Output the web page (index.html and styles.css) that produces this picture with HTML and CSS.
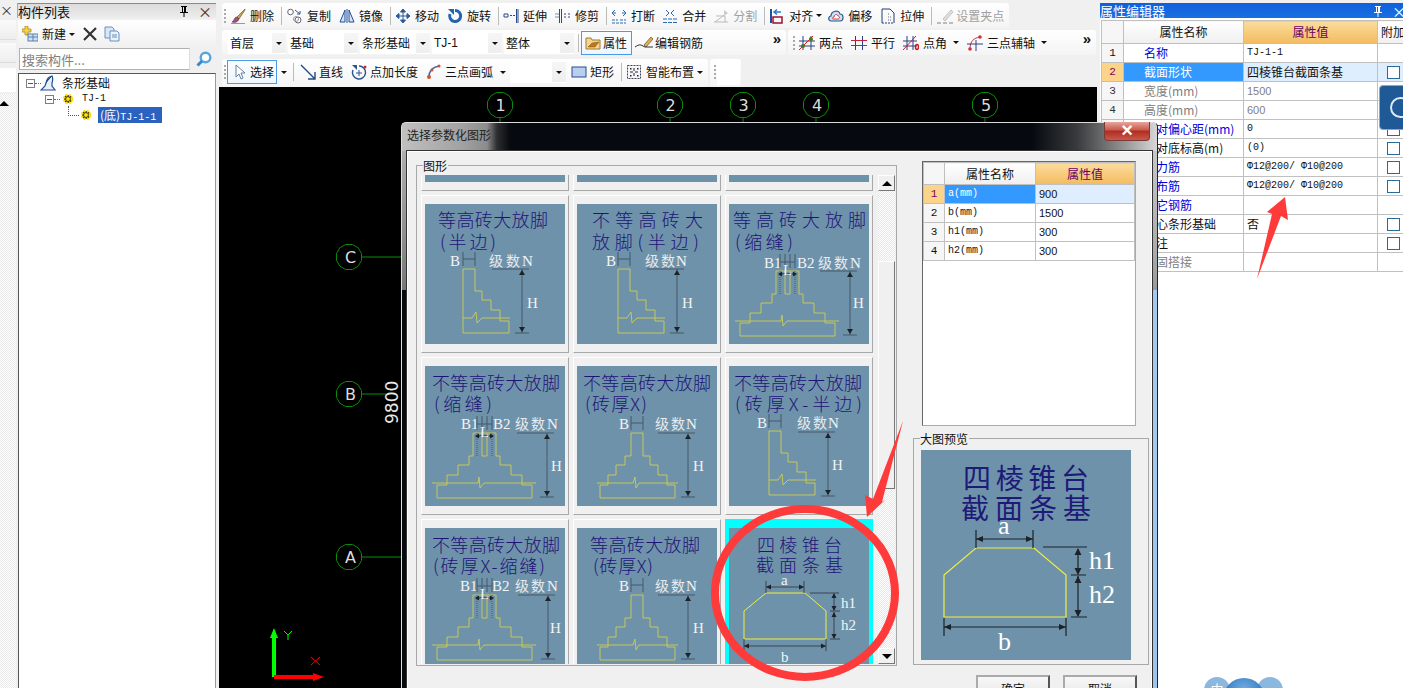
FILE: index.html
```html
<!DOCTYPE html>
<html lang="zh-CN">
<head>
<meta charset="utf-8">
<title>选择参数化图形</title>
<link rel="stylesheet" href="styles.css">
</head>
<body>
<svg class="defs" aria-hidden="true">
  <defs>
    <symbol id="i-pin" viewBox="0 0 12 12"><path d="M3 1h6v1H8v5h2v1H2V7h2V2H3zM5 2v5h1V2zM5.500 8h1v4h-1z"/></symbol>
    <symbol id="i-del" viewBox="0 0 16 16"><path d="M15 1 7 9l2 2 6-9z" fill="#c9a24a" stroke="#5a4a20" stroke-width=".6"/><path d="M7 9c-3 0-2 3-5 5 3 1 6 0 7-3z" fill="#a2507a" stroke="#5a2a4a" stroke-width=".6"/><path d="M1 15.500h14" stroke="#999"/></symbol>
    <symbol id="i-copy" viewBox="0 0 16 16"><circle cx="3.500" cy="4" r="2.800" fill="#fff" stroke="#667"/><circle cx="11" cy="12" r="3" fill="#fff" stroke="#667"/><circle cx="9" cy="11" r="2.500" fill="none" stroke="#99a"/><path d="M8 2l5 4M13 3v3h-3" fill="none" stroke="#2a5a9a"/></symbol>
    <symbol id="i-mirror" viewBox="0 0 16 16"><path d="M6 2 1 14h5zM10 2l5 12h-5z" fill="#d5e4f5" stroke="#1f4f9a"/><path d="M8 1v14" stroke="#1f4f9a"/></symbol>
    <symbol id="i-move" viewBox="0 0 16 16"><path d="M8 1v14M1 8h14M8 1 5.500 4h5zM8 15l-2.500-3h5zM1 8l3-2.500v5zM15 8l-3-2.500v5z" fill="#2a5a9a" stroke="#2a5a9a"/></symbol>
    <symbol id="i-rot" viewBox="0 0 16 16"><path d="M8 2.500a5.500 5.500 0 1 1-5 3.500" fill="none" stroke="#2563b0" stroke-width="3"/><path d="M1 1h6v6z" fill="#2563b0"/></symbol>
    <symbol id="i-ext" viewBox="0 0 16 16"><path d="M1 6h4v3H1z" fill="none" stroke="#2a4a8a"/><path d="M7 7.500h5" stroke="#2a4a8a" stroke-dasharray="2 1"/><path d="M13.500 1v14M15 1v14" stroke="#2a4a8a"/></symbol>
    <symbol id="i-trim" viewBox="0 0 16 16"><path d="M4.500 1v14M6.500 1v14" stroke="#2a4a8a"/><path d="M0 6h4M0 9h4" stroke="#7a90b0"/><path d="M9 6h2M9 9h2M13 6h2M13 9h2" stroke="#2a4a8a"/></symbol>
    <symbol id="i-brk" viewBox="0 0 16 16"><path d="M1 12h6M9 12h6M1 15h14" stroke="#2a6ab0" stroke-dasharray="3 1"/><path d="M4 2 1 5l3 3M12 2l3 3-3 3" fill="none" stroke="#2a6ab0"/><path d="M1 5h4M11 5h4" stroke="#2a6ab0"/></symbol>
    <symbol id="i-mrg" viewBox="0 0 16 16"><path d="M1 11h14M1 14.500h14" stroke="#2a6ab0" stroke-dasharray="4 1"/><path d="M4 2 7 5 4 8M12 2 9 5l3 3" fill="none" stroke="#2a6ab0"/></symbol>
    <symbol id="i-split" viewBox="0 0 16 16"><path d="M1 14h14M2 14 14 5M3 8h9v6" fill="none" stroke="#bbb"/><path d="M11 2l4 3-4 3" fill="#ccc"/></symbol>
    <symbol id="i-align" viewBox="0 0 16 16"><path d="M2 1v14" stroke="#1f4f9a" stroke-width="2"/><path d="M4 9h9v6H4z" fill="none" stroke="#a01030" stroke-width="1.500"/><path d="M12 4H5M8 1.500 5 4l3 2.500" fill="none" stroke="#2a7ad0" stroke-width="1.500"/></symbol>
    <symbol id="i-offs" viewBox="0 0 16 16"><path d="M3 13C0 13 0 8 3 8c0-5 8-7 9-2 4 0 4 7 0 7z" fill="#cfe0f0" stroke="#235a90" stroke-width="1.200"/><path d="M5 11c-1 0-1-2 1-2 0-3 4-3 4-1 2 0 2 3 0 3z" fill="#fff" stroke="#d04040"/></symbol>
    <symbol id="i-strch" viewBox="0 0 16 16"><path d="M2 15V1h8l4 4v10" fill="none" stroke="#1f3f80"/><path d="M2 15h12" stroke="#1f3f80" stroke-dasharray="2 1"/><path d="M8 6h2M8 9h3M8 12h3" stroke="#667" stroke-dasharray="1 1"/></symbol>
    <symbol id="i-grip" viewBox="0 0 18 16"><path d="M7 11 15 2l2 2-8 9z" fill="#ddd" stroke="#c4c4c4"/><path d="M1 15h4M7 15h4M13 15h4" stroke="#bbb" stroke-width="2"/></symbol>
    <symbol id="i-attr" viewBox="0 0 16 16"><path d="M1 3h5l1 2h8v9H1z" fill="#f4d78a" stroke="#a07830"/><path d="M3 12l4-4 7-1-4 5z" fill="#c07820" stroke="#805010" stroke-width=".5"/></symbol>
    <symbol id="i-rebar" viewBox="0 0 18 16"><path d="M9 10 16 2l2 2-7 8z" fill="#e8b050" stroke="#5a4a20" stroke-width=".7"/><path d="M0 12c3-2 5-3 8-1l2 1h8" fill="none" stroke="#333"/></symbol>
    <symbol id="i-two" viewBox="0 0 16 16"><path d="M4 1v14M12 1v14M0 6h16M0 11h16" stroke="#2a3f8a"/><path d="M0 15 14 1" stroke="#d01a1a"/><circle cx="4" cy="11" r="2" fill="#4a7a20"/><circle cx="12" cy="4" r="2" fill="#4a7a20"/></symbol>
    <symbol id="i-par" viewBox="0 0 16 16"><path d="M4.500 1v14M11.500 1v14" stroke="#2a3f8a"/><path d="M0 5.500h16M0 10.500h16" stroke="#c8203a"/></symbol>
    <symbol id="i-ang" viewBox="0 0 16 16"><path d="M4 1v14M10 1v14M0 6h14M0 11h14" stroke="#2a3f8a"/><path d="M0 15 13 1" stroke="#d01a1a"/><ellipse cx="14" cy="12" rx="1.500" ry="2.500" fill="none" stroke="#d01a1a" stroke-width="1.500"/></symbol>
    <symbol id="i-aux" viewBox="0 0 16 16"><path d="M3 14C3 6 7 3 13 2" fill="none" stroke="#d0303a"/><circle cx="3" cy="14" r="1.800" fill="#d0303a"/><circle cx="13" cy="2" r="1.800" fill="#d0303a"/><path d="M9 5v11M0 9h16" stroke="#2a3f8a"/></symbol>
    <symbol id="i-sel" viewBox="0 0 16 16"><path d="M4 1v12l3-3 2 5 2-1-2-5h4z" fill="#fff" stroke="#6a7fa0"/></symbol>
    <symbol id="i-line" viewBox="0 0 16 16"><path d="M1 1 15 15M15 8v7H8" fill="none" stroke="#224a80" stroke-width="1.400"/></symbol>
    <symbol id="i-len" viewBox="0 0 16 16"><path d="M8 2a6.500 6.500 0 1 1-6 4" fill="none" stroke="#2a5590" stroke-width="1.400"/><path d="M1 1h5v5z" fill="#2a5590"/><path d="M8 6v6M5 9h6" stroke="#2a5590"/><circle cx="14" cy="3" r="1.500" fill="#c03030"/></symbol>
    <symbol id="i-arc" viewBox="0 0 16 16"><path d="M3 13C3 7 7 3 13 2" fill="none" stroke="#3a6ab0" stroke-width="1.500"/><circle cx="3" cy="13" r="2" fill="#d8502a"/><circle cx="6" cy="6" r="1.500" fill="#d8502a"/><circle cx="13" cy="2" r="1.500" fill="#d8502a"/></symbol>
    <symbol id="i-rect" viewBox="0 0 16 16"><rect x="1" y="3" width="14" height="10" fill="#b8d0f0" stroke="#2a4a90"/></symbol>
    <symbol id="i-smart" viewBox="0 0 16 16"><rect x="1.500" y="1.500" width="13" height="13" fill="#f6f6f6" stroke="#445" stroke-dasharray="2 1"/><path d="M8 4v3M8 9v3M4 8h3M9 8h3" stroke="#223"/><path d="M4 4h1.500v1.500H4zM11 4h1.500v1.500H11zM4 11h1.500v1.500H4zM11 11h1.500v1.500H11z" fill="#223"/></symbol>
    <symbol id="i-new" viewBox="0 0 16 16"><path d="M3 0h3v3h3v3H6v3H3V6H0V3h3z" fill="#f4d23c" stroke="#a08020" stroke-width=".7"/><rect x="6" y="8" width="10" height="7" fill="#cfe0f2" stroke="#5a80b0"/><path d="M6 11h10M11 8v7" stroke="#5a80b0"/></symbol>
    <symbol id="i-x" viewBox="0 0 16 16"><path d="M2 2l12 12M14 2 2 14" stroke="#333" stroke-width="2.200"/></symbol>
    <symbol id="i-dup" viewBox="0 0 16 16"><path d="M1 1h7l2 2v9H1z" fill="#d8e6f6" stroke="#6a90c0"/><path d="M6 5h7l2 2v8H6z" fill="#eaf2fb" stroke="#6a90c0"/><path d="M8 9h5M8 11h5" stroke="#6a90c0"/></symbol>
    <symbol id="i-find" viewBox="0 0 16 16"><circle cx="9.500" cy="6.500" r="4.800" fill="#fff" stroke="#58a6e0" stroke-width="2.400"/><path d="M6 10 1.500 14.500" stroke="#3a86c8" stroke-width="3"/></symbol>
    <symbol id="i-root" viewBox="0 0 16 16"><path d="M1 15h14l-3-4V8c1-3 1-5 0-7-4 1-5 3-6 7l-1 3z" fill="#e8f0fa" stroke="#1f4f90" stroke-width="1.200"/><path d="M6 8c1-3 3-5 6-7" stroke="#1f4f90"/></symbol>
    <symbol id="i-gear" viewBox="0 0 12 12"><circle cx="6" cy="6" r="4" fill="#222" stroke="#ffe000" stroke-width="2.600" stroke-dasharray="2 1.200"/><circle cx="6" cy="6" r="2" fill="#ffe000"/></symbol>
    <symbol id="bubble" viewBox="-14 -14 28 28"><polygon points="12.500,3.400 9.200,9.200 3.400,12.500 -3.400,12.500 -9.200,9.200 -12.500,3.400 -12.500,-3.400 -9.200,-9.200 -3.400,-12.500 3.400,-12.500 9.200,-9.200 12.500,-3.400" fill="none" stroke="#0a8a0a"/></symbol>
    <g id="s-half"><path class="yl" d="M38 65h12v22h7v9h9v10h9v11h9v12H38z"/><path class="yl" d="M38 114h9l4-6 1 11 5-5h28"/><path class="dk" d="M38 48v14M50 48v14M38 55h12"/></g>
    <g id="s-slot"><path class="yl" d="M48 67v23h-4v9H33v10H22v10H12v13h95v-13H97v-10H86V99H75v-9h-4V67zM57 67v23h5V67"/><path class="yl" d="M7 117h46l1-6 1 11 4-5h52"/><path class="dk" d="M52 50v14M57 50v14M62 50v14M67 50v14M52 58h15"/><path class="dot" d="M52 67v23M67 67v23"/><path class="ar" d="M52 70h15"/><path class="hd" d="M50 70l4-2.500v5zM69 70l-4-2.500v5z"/></g>
    <g id="s-full"><path class="yl" d="M54 67h12v23h7v9h8v10h9v10h8v13H23v-13h8v-10h8V99h9v-9h6z"/><path class="yl" d="M20 117h36l2-6 1 11 3-5h39"/><path class="dk" d="M54 50v14M66 50v14M54 57h12"/></g>
    <g id="s-hdim"><path class="dk" d="M0 0h37M30 0v64M23 64h14"/><path class="hd" d="M30 1l-3 5h6zM30 63l-3-5h6z"/></g>
  </defs>
</svg>

<div class="app">
  <aside class="strip">
    <div class="strip-x">×</div>
    <div class="strip-tab"></div>
    <div class="strip-tab"></div>
    <div class="strip-white"></div>
    <div class="strip-scroll"><span class="up-arrow"></span></div>
  </aside>

  <section class="list-panel">
    <header class="panel-head"><span>构件列表</span><svg class="pin"><use href="#i-pin"/></svg><span class="close">×</span></header>
    <div class="list-tools">
      <svg class="ic"><use href="#i-new"/></svg><span>新建</span><i class="caret"></i>
      <svg class="ic ic-x"><use href="#i-x"/></svg>
      <svg class="ic ic-dup"><use href="#i-dup"/></svg>
    </div>
    <div class="search-row">
      <div class="search-box">搜索构件...</div>
      <svg class="ic"><use href="#i-find"/></svg>
    </div>
    <div class="tree">
      <div class="node n1"><i class="exp"></i><i class="dots"></i><svg class="ic"><use href="#i-root"/></svg><span>条形基础</span></div>
      <div class="node n2"><i class="exp"></i><i class="dots"></i><svg class="gear"><use href="#i-gear"/></svg><span class="mono">TJ-1</span></div>
      <div class="node n3"><i class="elbow"></i><svg class="gear"><use href="#i-gear"/></svg><span class="sel-node">(底)<span class="mono">TJ-1-1</span></span></div>
    </div>
  </section>

  <main class="center">
    <div class="tb-row r1">
      <div class="tb">
        <i class="grip"></i>
        <div class="it"><svg class="ic"><use href="#i-del"/></svg>删除</div><i class="sep first"></i>
        <div class="it"><svg class="ic"><use href="#i-copy"/></svg>复制</div>
        <div class="it"><svg class="ic"><use href="#i-mirror"/></svg>镜像</div><i class="sep"></i>
        <div class="it"><svg class="ic"><use href="#i-move"/></svg>移动</div>
        <div class="it"><svg class="ic"><use href="#i-rot"/></svg>旋转</div><i class="sep"></i>
        <div class="it"><svg class="ic"><use href="#i-ext"/></svg>延伸</div>
        <div class="it"><svg class="ic"><use href="#i-trim"/></svg>修剪</div><i class="sep"></i>
        <div class="it tight"><svg class="ic"><use href="#i-brk"/></svg>打断</div>
        <div class="it tight"><svg class="ic"><use href="#i-mrg"/></svg>合并</div>
        <div class="it off"><svg class="ic"><use href="#i-split"/></svg>分割</div><i class="sep"></i>
        <div class="it tighter"><svg class="ic"><use href="#i-align"/></svg>对齐<i class="caret"></i></div>
        <div class="it"><svg class="ic"><use href="#i-offs"/></svg>偏移</div>
        <div class="it"><svg class="ic"><use href="#i-strch"/></svg>拉伸</div><i class="sep"></i>
        <div class="it off last"><svg class="ic ic18"><use href="#i-grip"/></svg>设置夹点</div>
      </div>
    </div>
    <div class="tb-row r2">
      <div class="tb tb-combos">
        <div class="combo c1">首层<i class="drop"></i></div>
        <div class="combo">基础<i class="drop"></i></div>
        <div class="combo">条形基础<i class="drop"></i></div>
        <div class="combo"><span class="sans">TJ-1</span><i class="drop"></i></div>
        <div class="combo">整体<i class="drop"></i></div>
        <i class="sep sep-a"></i>
        <div class="btn-on attr"><svg class="ic"><use href="#i-attr"/></svg>属性</div>
        <div class="it rebar"><svg class="ic ic18"><use href="#i-rebar"/></svg>编辑钢筋</div>
        <span class="more">»</span>
      </div>
      <div class="tb tb-axis">
        <i class="grip"></i>
        <div class="it"><svg class="ic"><use href="#i-two"/></svg>两点</div>
        <div class="it"><svg class="ic"><use href="#i-par"/></svg>平行</div>
        <div class="it"><svg class="ic"><use href="#i-ang"/></svg>点角<i class="caret c-wide"></i></div>
        <div class="it"><svg class="ic"><use href="#i-aux"/></svg>三点辅轴<i class="caret c-wide"></i></div>
        <span class="more">»</span>
      </div>
    </div>
    <div class="tb-row r3">
      <div class="tb tb-draw">
        <i class="grip"></i>
        <div class="btn-on pick"><svg class="ic"><use href="#i-sel"/></svg>选择</div><i class="caret c-pick"></i>
        <i class="sep sep-b"></i>
        <div class="it"><svg class="ic"><use href="#i-line"/></svg>直线</div>
        <div class="it"><svg class="ic"><use href="#i-len"/></svg>点加长度</div>
        <div class="it"><svg class="ic"><use href="#i-arc"/></svg>三点画弧<i class="caret c-wide"></i></div>
        <div class="combo c-blank"><i class="drop"></i></div>
        <div class="it"><svg class="ic"><use href="#i-rect"/></svg>矩形</div><i class="sep"></i>
        <div class="it smart"><svg class="ic"><use href="#i-smart"/></svg>智能布置<i class="caret"></i></div>
      </div>
      <div class="tb tb-mini"><i class="grip"></i><div class="mini-box"></div></div>
    </div>
    <div class="canvas">
      <svg class="cad" width="878" height="601" viewBox="219 87 878 601">
        <g class="axis-lines">
          <path d="M500 118v8M670 118v8M743 118v8M816 118v8M985 118v8M362 257h40M362 394h24M362 557h40"/>
        </g>
        <use href="#bubble" x="486" y="91" width="28" height="28"/><text class="bub" x="500.500" y="111">1</text>
        <use href="#bubble" x="656" y="91" width="28" height="28"/><text class="bub" x="670.500" y="111">2</text>
        <use href="#bubble" x="729" y="91" width="28" height="28"/><text class="bub" x="743.500" y="111">3</text>
        <use href="#bubble" x="802" y="91" width="28" height="28"/><text class="bub" x="817" y="111">4</text>
        <use href="#bubble" x="971" y="91" width="28" height="28"/><text class="bub" x="986" y="111">5</text>
        <use href="#bubble" x="335" y="243" width="28" height="28"/><text class="bub" x="350.500" y="263">C</text>
        <use href="#bubble" x="335" y="380" width="28" height="28"/><text class="bub" x="350.500" y="400">B</text>
        <use href="#bubble" x="335" y="543" width="28" height="28"/><text class="bub" x="350.500" y="563">A</text>
        <text class="dim-txt" transform="translate(398 424) rotate(-90)">9800</text>
        <path class="ax-y" d="M274 677v-40"/><path class="ax-yh" d="M274 628l-4 10h8z"/>
        <path class="ax-x" d="M274 677h40"/><path class="ax-xh" d="M324 677l-11-4v8z"/>
        <path class="ax-yl" d="M284 631l4 4 4-4M288 635v5"/>
        <path class="ax-xl" d="M311 657l9 8M320 657l-9 8"/>
      </svg>
    </div>
  </main>

  <section class="prop">
    <header class="prop-head"><span>属性编辑器</span><svg class="pin"><use href="#i-pin"/></svg><span class="close">×</span></header>
    <table class="grid prop-grid">
      <colgroup><col class="c-n"><col class="c-name"><col class="c-val"><col></colgroup>
      <thead><tr><th class="rh"></th><th class="hn">属性名称</th><th class="hv">属性值</th><th class="hx">附加</th></tr></thead>
      <tbody>
        <tr><td class="rh">1</td><td class="pn blue">名称</td><td class="mono">TJ-1-1</td><td></td></tr>
        <tr class="cur"><td class="rh">2</td><td class="pn">截面形状</td><td>四棱锥台截面条基</td><td class="ck"><i></i></td></tr>
        <tr class="dis"><td class="rh">3</td><td class="pn">宽度(mm)</td><td class="num">1500</td><td class="ck"></td></tr>
        <tr class="dis"><td class="rh">4</td><td class="pn">高度(mm)</td><td class="num">600</td><td class="ck"></td></tr>
        <tr><td class="rh">5</td><td class="pn blue">相对偏心距(mm)</td><td class="mono">0</td><td class="ck"><i></i></td></tr>
        <tr><td class="rh">6</td><td class="pn">相对底标高(m)</td><td class="mono">(0)</td><td class="ck"><i></i></td></tr>
        <tr><td class="rh">7</td><td class="pn blue">受力筋</td><td class="mono">Φ12@200/ Φ10@200</td><td class="ck"><i></i></td></tr>
        <tr><td class="rh">8</td><td class="pn blue">分布筋</td><td class="mono">Φ12@200/ Φ10@200</td><td class="ck"><i></i></td></tr>
        <tr><td class="rh">9</td><td class="pn blue">其它钢筋</td><td></td><td></td></tr>
        <tr><td class="rh">10</td><td class="pn">空心条形基础</td><td>否</td><td class="ck"><i></i></td></tr>
        <tr><td class="rh">11</td><td class="pn">备注</td><td></td><td class="ck"><i></i></td></tr>
        <tr class="dis"><td class="rh">12</td><td class="pn">锚固搭接</td><td></td><td></td></tr>
      </tbody>
    </table>
  </section>
</div>

<div class="dlg">
  <div class="dlg-title">
    <span class="dlg-name">选择参数化图形</span>
    <span class="dlg-x">×</span>
  </div>
  <div class="dlg-client">
    <div class="group shapes">
      <span class="g-label">图形</span>
      <div class="list-view">
        <div class="thumbs">
          <div class="thumb-grid">
            <div class="cell"><svg class="th" viewBox="0 0 140 140"></svg></div>
            <div class="cell"><svg class="th" viewBox="0 0 140 140"></svg></div>
            <div class="cell"><svg class="th" viewBox="0 0 140 140"></svg></div>

            <div class="cell"><svg class="th" viewBox="0 0 140 140">
              <text class="tt" x="13" y="23" textLength="110">等高砖大放脚</text><text class="tt" x="15" y="45" textLength="56">(半边)</text>
              <text class="lb" x="25" y="62">B</text><text class="lbc" x="64" y="62" textLength="31">级数</text><text class="lb" x="97" y="62">N</text>
              <use href="#s-half"/><use href="#s-hdim" x="67" y="65"/><text class="lb" x="102" y="104">H</text>
            </svg></div>
            <div class="cell"><svg class="th" viewBox="0 0 140 140">
              <text class="tt" x="15" y="23" textLength="111">不等高砖大</text><text class="tt" x="15" y="45" textLength="107">放脚(半边)</text>
              <text class="lb" x="29" y="62">B</text><text class="lbc" x="68" y="62" textLength="30">级数</text><text class="lb" x="99" y="62">N</text>
              <use href="#s-half" x="3"/><use href="#s-hdim" x="70" y="65"/><text class="lb" x="105" y="104">H</text>
            </svg></div>
            <div class="cell"><svg class="th" viewBox="0 0 140 140">
              <text class="tt" x="4" y="23" textLength="133">等高砖大放脚</text><text class="tt" x="6" y="45" textLength="58">(缩缝)</text>
              <text class="lb" x="35" y="64">B1</text><text class="lb" x="68" y="64">B2</text><text class="lbc" x="89" y="64" textLength="30">级数</text><text class="lb" x="121" y="64">N</text>
              <use href="#s-slot" x="-1"/><text class="lb" x="54" y="71">L</text><use href="#s-hdim" x="91" y="67"/><text class="lb" x="124" y="104">H</text>
            </svg></div>

            <div class="cell"><svg class="th" viewBox="0 0 140 140">
              <text class="tt" x="7" y="24" textLength="128">不等高砖大放脚</text><text class="tt" x="9" y="45" textLength="58">(缩缝)</text>
              <text class="lb" x="36" y="63">B1</text><text class="lb" x="68" y="63">B2</text><text class="lbc" x="90" y="63" textLength="30">级数</text><text class="lb" x="122" y="63">N</text>
              <use href="#s-slot"/><text class="lb" x="55" y="71">L</text><use href="#s-hdim" x="92" y="67"/><text class="lb" x="126" y="105">H</text>
            </svg></div>
            <div class="cell"><svg class="th" viewBox="0 0 140 140">
              <text class="tt" x="6" y="24" textLength="128">不等高砖大放脚</text><text class="tt" x="8" y="45" textLength="62">(砖厚X)</text>
              <text class="lb" x="42" y="63">B</text><text class="lbc" x="78" y="63" textLength="30">级数</text><text class="lb" x="109" y="63">N</text>
              <use href="#s-full"/><use href="#s-hdim" x="81" y="67"/><text class="lb" x="116" y="105">H</text>
            </svg></div>
            <div class="cell"><svg class="th" viewBox="0 0 140 140">
              <text class="tt" x="5" y="24" textLength="128">不等高砖大放脚</text><text class="tt" x="6" y="45" textLength="127">(砖厚X-半边)</text>
              <text class="lb" x="28" y="62">B</text><text class="lbc" x="68" y="62" textLength="30">级数</text><text class="lb" x="99" y="62">N</text>
              <use href="#s-half" x="2"/><use href="#s-hdim" x="69" y="66"/><text class="lb" x="103" y="104">H</text>
            </svg></div>

            <div class="cell"><svg class="th" viewBox="0 0 140 140">
              <text class="tt" x="7" y="24" textLength="128">不等高砖大放脚</text><text class="tt" x="8" y="45" textLength="112">(砖厚X-缩缝)</text>
              <text class="lb" x="35" y="63">B1</text><text class="lb" x="67" y="63">B2</text><text class="lbc" x="90" y="63" textLength="30">级数</text><text class="lb" x="122" y="63">N</text>
              <use href="#s-slot"/><text class="lb" x="55" y="71">L</text><use href="#s-hdim" x="93" y="67"/><text class="lb" x="125" y="105">H</text>
            </svg></div>
            <div class="cell"><svg class="th" viewBox="0 0 140 140">
              <text class="tt" x="13" y="24" textLength="110">等高砖大放脚</text><text class="tt" x="16" y="45" textLength="60">(砖厚X)</text>
              <text class="lb" x="42" y="63">B</text><text class="lbc" x="78" y="63" textLength="30">级数</text><text class="lb" x="109" y="63">N</text>
              <use href="#s-full"/><use href="#s-hdim" x="81" y="67"/><text class="lb" x="116" y="105">H</text>
            </svg></div>
            <div class="cell on"><svg class="th" viewBox="0 0 140 140">
              <text class="tt" x="28" y="24" textLength="85">四棱锥台</text><text class="tt" x="27" y="44" textLength="87">截面条基</text>
              <text class="lbs" x="52" y="57">a</text>
              <path class="yl2" d="M37 65h39l21 18v28H15V83z"/>
              <path class="dk2" d="M37 53v12M75 53v12M37 59h38M81 65h29M101 83h10M101 111h10M15 111v12M97 111v12M15 118h82M105 66v16M105 84v26"/>
              <path class="hd" d="M37 59l5-2.500v5zM75 59l-5-2.500v5zM15 118l5-2.500v5zM97 118l-5-2.500v5zM105 65l-2.500 5h5zM105 83l-2.500-5h5zM105 84l-2.500 5h5zM105 111l-2.500-5h5z"/>
              <text class="lbs" x="112" y="80">h1</text><text class="lbs" x="112" y="102">h2</text><text class="lbs" x="52" y="134">b</text>
            </svg></div>
          </div>
        </div>
        <div class="vbar">
          <div class="sb-btn"><span class="up-arrow"></span></div>
          <div class="sb-track t1"></div>
          <div class="sb-thumb"></div>
          <div class="sb-track t2"></div>
          <div class="sb-btn"><span class="dn-arrow"></span></div>
        </div>
      </div>
    </div>

    <div class="side">
      <div class="mini-grid">
        <table class="grid">
          <colgroup><col class="m-n"><col class="m-name"><col></colgroup>
          <thead><tr><th class="rh"></th><th class="hn">属性名称</th><th class="hv">属性值</th></tr></thead>
          <tbody>
            <tr class="cur"><td class="rh">1</td><td class="pm mono">a(mm)</td><td class="num">900</td></tr>
            <tr><td class="rh">2</td><td class="pm mono">b(mm)</td><td class="num">1500</td></tr>
            <tr><td class="rh">3</td><td class="pm mono">h1(mm)</td><td class="num">300</td></tr>
            <tr><td class="rh">4</td><td class="pm mono">h2(mm)</td><td class="num">300</td></tr>
          </tbody>
        </table>
      </div>
      <div class="group preview">
        <span class="g-label">大图预览</span>
        <svg class="big" viewBox="0 0 210 210">
          <text class="bt" x="42" y="39" textLength="126">四棱锥台</text><text class="bt" x="40" y="69" textLength="130">截面条基</text>
          <text class="bl" x="77" y="84">a</text>
          <path class="yl3" d="M55 98h58l32 27v42H23v-42z"/>
          <path class="dk3" d="M55 80v18M112 80v18M55 89h57M122 97h44M150 125h15M150 167h16M23 168v18M145 168v18M23 177h122M157 99v25M157 126v40"/>
          <path class="hd" d="M55 89l7-3v6zM112 89l-7-3v6zM23 177l7-3v6zM145 177l-7-3v6zM157 98l-3.500 7h7zM157 125l-3.500-7h7zM157 126l-3.500 7h7zM157 167l-3.500-7h7z"/>
          <text class="bl" x="168" y="119">h1</text><text class="bl" x="168" y="153">h2</text><text class="bl" x="77" y="200">b</text>
        </svg>
      </div>
      <div class="dlg-btns"><button class="b">确定</button><button class="b">取消</button></div>
    </div>
  </div>
</div>

<div class="float-btn"><i></i></div>
<div class="ime"><span class="ime-l">中</span><span class="ime-r"></span><span class="ime-c"></span></div>

<svg class="marks" width="1403" height="688" viewBox="0 0 1403 688" aria-hidden="true">
  <ellipse cx="805" cy="593" rx="90" ry="84" fill="none" stroke="#ff3a3a" stroke-width="8"/>
  <polygon points="867,517 865,495 873,499 903,421 882,502 885,500" fill="#ff3a3a"/>
  <polygon points="1285,197 1288,220 1281,216 1257,279 1272,214 1267,212" fill="#ff3a3a"/>
</svg>
</body>
</html>
```
FILE: styles.css
```css
* { box-sizing: border-box; }
html, body { margin: 0; height: 100%; overflow: hidden; }
body {
  position: relative;
  width: 1403px;
  height: 688px;
  background: #f0f0f0;
  font: 12px/1 "Noto Sans CJK SC", "Liberation Sans", sans-serif;
  color: #111;
}
.defs { position: absolute; width: 0; height: 0; }
i { display: block; font-style: normal; }
.mono { font-family: "Liberation Mono", "Noto Sans CJK SC", monospace; font-size: 10px; }
.num { font-family: "Liberation Sans", sans-serif; font-size: 11px; }
.sans { font-family: "Liberation Sans", sans-serif; font-size: 12px; }

.app { display: flex; height: 688px; }

/* far-left clipped dock */
.strip { width: 16px; padding-top: 3px; flex: none; display: flex; flex-direction: column; }
.strip-x { height: 15px; color: #333; font-size: 13px; line-height: 14px; }
.strip-tab { height: 20px; margin: 2px 0 1px; background: linear-gradient(#fafafa, #eee); border-bottom: 1px solid #ddd; }
.strip-white { height: 24px; margin-top: 4px; background: #fff; }
.strip-scroll { flex: 1; margin-top: 2px; background: conic-gradient(#fff 25%, #e9e9e9 0 50%, #fff 0 75%, #e9e9e9 0) 0 0/2px 2px; }
.strip-scroll .up-arrow { margin: 7px 0 0 -1px; }

/* component list */
.list-panel { width: 201px; flex: none; margin-right: 2px; padding-top: 3px; display: flex; flex-direction: column; }
.panel-head {
  height: 15px; margin: 0 1px; padding: 0 4px 0 0; background: linear-gradient(#dcdcdc, #ececec);
  border-top: 1px solid #8a8a8a; border-left: 1px solid #aaa; display: flex; align-items: center; font-size: 13px;
}
.pin { margin-left: auto; width: 12px; height: 12px; flex: none; }
.close { margin-left: 8px; font-size: 14px; color: #333; }
.list-tools { height: 28px; margin: 2px 1px 0 2px; padding-left: 4px; display: flex; align-items: center; background: linear-gradient(#fff, #f0f0f0); }
.caret { width: 0; height: 0; border: 3px solid transparent; border-top: 3px solid #111; border-bottom: 0; margin-left: 3px; flex: none; }
.ic-x { margin-left: 7px; }
.ic-dup { margin-left: 2px; }
.search-row { display: flex; align-items: center; height: 22px; margin-left: 3px; }
.search-box { width: 171px; height: 22px; background: #fff; border: 1px solid #b0b0b0; border-right-color: #ddd; color: #808080; padding: 4px 0 0 2px; font-size: 13px; }
.search-row .ic { margin-left: 6px; }
.tree { flex: 1; margin: 3px 1px 0 2px; background: #fff; border-top: 1px solid #555; border-left: 1px solid #555; border-right: 1px solid #999; padding-top: 1px; }
.node { height: 16px; display: flex; align-items: center; }
.n1 { padding-left: 7px; }
.n2 { padding-left: 26px; }
.n3 { padding-left: 49px; }
.exp { width: 9px; height: 9px; border: 1px solid #808080; background: linear-gradient(#fff 3px, #555 3px, #555 4px, #fff 4px) 1px 0/5px 7px no-repeat #fff; flex: none; }
.dots { width: 6px; border-top: 1px dotted #666; }
.n1 .ic { margin-right: 6px; margin-left: -1px; }
.gear { width: 12px; height: 12px; margin: 0 8px 0 2px; flex: none; }
.elbow { width: 11px; height: 10px; margin-top: -9px; border-left: 1px dotted #555; border-bottom: 1px dotted #555; }
.n3 .gear { margin: 0 6px 0 1px; }
.sel-node { background: #2b62c0; color: #fff; height: 16px; width: 64px; padding: 2px 0 0 2px; white-space: nowrap; }

/* center column */
.center { width: 878px; flex: none; display: flex; flex-direction: column; padding-top: 3px; }
.tb-row { display: flex; gap: 2px; padding-left: 3px; flex: none; }
.r1 { height: 25px; margin-bottom: 2px; }
.r2 { height: 25px; margin-bottom: 4px; }
.r3 { height: 28px; }
.tb { display: flex; align-items: center; background: linear-gradient(#fff, #f4f4f4); border-radius: 3px; padding: 0 5px 0 1px; }
.grip { width: 4px; height: 16px; margin: 0 3px 0 1px; background: radial-gradient(circle, #aaa 1px, transparent 1.3px) 0 0/4px 4px; flex: none; }
.r1 .grip { margin-right: 3px; margin-left: 0; }
.it { display: flex; align-items: center; margin-right: 8px; white-space: nowrap; flex: none; }
.it.tight { margin-right: 7px; }
.it.tighter { margin-right: 6px; }
.it.last { margin-right: 0; }
.ic { width: 16px; height: 16px; margin-right: 4px; flex: none; }
.ic18 { width: 18px; margin-right: 2px; }
.it.off { color: #a0a0a0; }
.sep { width: 1px; height: 18px; background: #bbb; margin: 0 4px 0 -1px; flex: none; }
.sep.first { margin-right: 5px; }
.combo { width: 70px; height: 22px; background: #fff; display: flex; align-items: center; padding-left: 2px; position: relative; flex: none; margin-right: 2px; }
.combo.c1 { width: 58px; }
.drop { margin-left: auto; width: 14px; height: 20px; background: linear-gradient(#f6f6f6, #eee); position: relative; }
.drop::after { content: ""; position: absolute; left: 4px; top: 9px; border: 3px solid transparent; border-top-color: #111; border-bottom: 0; }
.tb-combos { width: 564px; padding-left: 6px; }
.sep-a { margin: 0 2px 0 2px; }
.btn-on { display: flex; align-items: center; border: 1px solid #4a9ae8; background: linear-gradient(#fafdff, #eef6fd); flex: none; }
.attr { width: 51px; height: 24px; padding-left: 3px; margin-right: 3px; }
.attr .ic { margin-right: 2px; }
.rebar { margin-right: 0; }
.more { margin-left: auto; font: bold 15px/12px "Liberation Sans", sans-serif; align-self: flex-start; margin-top: 3px; }
.tb-axis { width: 308px; padding-left: 3px; }
.c-wide { margin-left: 6px; }
.tb-draw { width: 486px; padding: 0 5px 2px 1px; }
.tb-draw .grip { margin: 0; }
.r3 .ic { margin-right: 3px; }
.r3 .tb-draw .c-wide { margin-left: 7px; }
.r3 .smart .ic { margin-right: 4px; }
.pick { width: 50px; height: 24px; padding-left: 4px; }
.r3 .pick .ic { margin-right: 2px; }
.c-pick { margin: 0 5px 0 4px; }
.sep-b { margin: 0 6px 0 1px; }
.c-blank { width: 56px; margin: 0 5px 0 -4px; }
.tb-mini { width: 31px; padding: 0 1px 2px 3px; }
.tb-mini .grip { margin: 0; }
.mini-box { width: 23px; height: 25px; background: #fff; }

.canvas { flex: 1; background: #000; position: relative; }
.cad { display: block; }
.axis-lines path { stroke: #0a8a0a; fill: none; }
.bub { font: 16px "DejaVu Sans", sans-serif; fill: #ddd; text-anchor: middle; }
.dim-txt { font: 17px "DejaVu Sans", sans-serif; fill: #e8e8e8; }
.ax-y { stroke: #0f0; stroke-width: 4; }
.ax-yh { fill: #0f0; }
.ax-x { stroke: #f00; stroke-width: 4; }
.ax-xh { fill: #f00; }
.ax-yl { stroke: #0f0; fill: none; }
.ax-xl { stroke: #f00; fill: none; }

/* property panel */
.prop { flex: 1; margin-left: 3px; padding-top: 3px; background: linear-gradient(#f0f0f0 0, #f0f0f0 3px, #fff 3px); min-width: 0; overflow: hidden; }
.prop-head { height: 15px; background: linear-gradient(#0f5fdc, #1a70e0); color: #fff; display: flex; align-items: center; font-size: 13px; }
.prop-head .pin { fill: #fff; }
.prop-head .close { color: #fff; margin-left: 8px; margin-right: -3px; }
.prop-grid { margin: 2px 0 0 1px; width: 304px; }
.grid { border-collapse: collapse; table-layout: fixed; background: #fff; }
.grid th, .grid td { border: 1px solid #c0c0c0; height: 19px; padding: 0 3px; white-space: nowrap; overflow: hidden; font-weight: 400; text-align: left; }
.grid thead th { height: 23px; text-align: center; }
.c-n { width: 22px; }
.c-name { width: 120px; }
.c-val { width: 134px; }
.rh { background: #f6f6f6; text-align: center !important; padding: 0 !important; font-family: "Liberation Mono", monospace; font-size: 11px; }
.hn { background: linear-gradient(#fff, #efefef); }
.hv { background: linear-gradient(#fbdc9c, #f3bb60); color: #680068; }
.hx { background: linear-gradient(#fff, #f0f0f0); text-align: left !important; }
.pn { padding-left: 20px !important; }
.blue { color: #0000e0; }
.dis td { color: #808080; }
.dis .rh { color: #333; }
.cur .rh { background: #fbd48c; color: #800050; }
.cur .pn, .cur .pm { background: #3399ff; color: #fff; }
.cur td { background: #deeeff; }
.ck i { width: 13px; height: 13px; border: 1px solid #2a6a98; margin-left: 6px; background: #fff; }

/* dialog window */
.dlg {
  position: absolute; left: 401px; top: 122px; width: 757px; height: 570px;
  border: 1px solid #dcdcdc; border-right-color: #222; border-radius: 5px 5px 0 0;
  background:
    linear-gradient(90deg, #c0c0c0 0, #a2a2a2 60px, #8c8c8c 85px, rgba(60,60,60,.7) 95px, transparent 108px) 0 0/100% 28px no-repeat,
    linear-gradient(270deg, #d8d8d8 0, #9a9a9a 30px, rgba(90,90,90,.6) 80px, transparent 125px) 0 0/100% 28px no-repeat,
    linear-gradient(#b8b8b8, #888 130px, #777) 0 0/5px 167px no-repeat,
    linear-gradient(#cfcfcf, #aaa 130px, #999) 100% 0/5px 167px no-repeat,
    linear-gradient(#a8ccf2, #9cc4ee) 100% 0/5px 100% no-repeat,
    #060a10;
  display: flex; flex-direction: column;
}
.dlg-title { height: 27px; position: relative; flex: none; padding: 6px 0 0 5px; }
.dlg-name { color: #222; }
.dlg-x {
  position: absolute; left: 702px; top: -1px; width: 46px; height: 19px;
  background: linear-gradient(#e8a59c, #c9574b 45%, #b02c20 50%, #c8584c); border: 1px solid #7a3a36; border-top: 0;
  border-radius: 0 0 4px 4px; color: #fff; font: bold 20px/17px "Liberation Sans", sans-serif; text-align: center;
}
.dlg-client {
  flex: 1; margin: 0 4px 0 4px; background: #f0f0f0; border: 1px solid #333; box-shadow: inset 0 0 0 1px #fff;
  display: flex; align-items: flex-start;
}
.group { border: 1px solid #a8a8a8; position: relative; }
.g-label { position: absolute; left: 6px; top: -7px; background: #f0f0f0; padding-right: 1px; line-height: 14px; }
.shapes { width: 481px; height: 501px; margin: 14px 0 0 9px; padding: 9px 0 0 0; }
.list-view { display: flex; height: 489px; width: 478px; overflow: hidden; background: #f0f0f0; }
.thumbs { width: 461px; flex: none; height: 489px; overflow: hidden; padding-left: 4px; }
.thumb-grid { margin-top: -142px; display: grid; grid-template-columns: repeat(3, 148px); grid-auto-rows: 158px; gap: 4px; }
.cell { border: 1px solid; border-color: #fff #a8a8a8 #a8a8a8 #fff; padding: 8px 3px; height: 158px; background: #f0f0f0; }
.cell.on { background: #00ffff; border-color: #00ffff; }
.th { width: 140px; height: 140px; display: block; background: #6e92aa; }
.tt { font-size: 18px; font-weight: 300; fill: #1e1478; font-family: "Noto Sans CJK SC", sans-serif; }
.lb { font: 15px "Liberation Serif", serif; fill: #f2f4f6; }
.lbc { font-size: 14px; fill: #e6eaee; }
.lbs { font: 15px "Liberation Serif", serif; fill: #f2f4f6; }
.yl { fill: none; stroke: #c6c85a; stroke-width: 1; }
.dk { fill: none; stroke: #46586a; stroke-width: 1; }
.dot { fill: none; stroke: #46586a; stroke-dasharray: 1 1; }
.ar { stroke: #222; fill: none; }
.hd { fill: #1c2228; }
.yl2 { fill: none; stroke: #f0ee40; }
.dk2 { fill: none; stroke: #3a4450; }
.vbar { width: 17px; flex: none; display: flex; flex-direction: column; }
.sb-btn { height: 16px; background: #f0f0f0; border: 1px solid; border-color: #fff #777 #777 #fff; display: flex; align-items: center; justify-content: center; flex: none; }
.up-arrow { display: block; width: 0; height: 0; border: 5px solid transparent; border-bottom: 5px solid #000; border-top: 0; }
.dn-arrow { display: block; width: 0; height: 0; border: 5px solid transparent; border-top: 5px solid #000; border-bottom: 0; }
.sb-track { background: conic-gradient(#fff 25%, #e6e6e6 0 50%, #fff 0 75%, #e6e6e6 0) 0 0/2px 2px; }
.t1 { height: 70px; }
.t2 { flex: 1; }
.sb-thumb { height: 228px; flex: none; background: #f0f0f0; border: 1px solid; border-color: #fff #777 #777 #fff; }

.side { margin-left: 16px; width: 237px; padding-top: 10px; flex: none; }
.mini-grid { width: 214px; height: 265px; margin-left: 9px; background: #fff; border: 1px solid #aaa; border-left-color: #666; border-top-color: #666; }
.mini-grid .grid { width: 212px; }
.mini-grid .grid thead th { height: 22px; }
.m-n { width: 21px; }
.m-name { width: 91px; }
.pm { padding-left: 3px; }
.preview { width: 236px; height: 227px; margin-top: 12px; padding: 11px 0 0 7px; }
.big { display: block; width: 210px; height: 210px; background: #6e92aa; }
.bt { font-size: 28px; font-weight: 400; fill: #1e1a78; font-family: "Noto Sans CJK SC", sans-serif; }
.bl { font: 26px "Liberation Serif", serif; fill: #fff; }
.yl3 { fill: none; stroke: #f0ee40; stroke-width: 1.200; }
.dk3 { fill: none; stroke: #1c2228; stroke-width: 1.200; }
.dlg-btns { display: flex; gap: 13px; padding-left: 63px; margin-top: 10px; }
.b { width: 74px; height: 26px; background: linear-gradient(#f8f8f8, #e4e4e4); border: 2px solid; border-color: #aaa #555 #555 #aaa; font: 12px "Noto Sans CJK SC", sans-serif; color: #111; padding: 0; }

/* overlays */
.float-btn { position: absolute; left: 1379px; top: 85px; width: 30px; height: 45px; background: #1f5a96; border: 1px solid #8aa8c4; border-radius: 4px; overflow: hidden; }
.float-btn i { position: absolute; left: 10px; top: 11px; width: 21px; height: 21px; border-radius: 50%; border: 2px solid #dfeaf5; }
.ime { position: absolute; left: 1204px; top: 677px; width: 80px; height: 30px; }
.ime span { position: absolute; border-radius: 50%; }
.ime-l { left: 0; top: 0; width: 26px; height: 26px; background: #8ab8de; color: #fff; font-size: 13px; text-align: center; line-height: 24px; }
.ime-r { left: 53px; top: 0; width: 26px; height: 26px; background: #8ab8de; }
.ime-c { left: 19px; top: 1px; width: 42px; height: 42px; background: radial-gradient(circle at 50% 30%, #7ab0e0, #2c78c4 60%); }
.marks { position: absolute; left: 0; top: 0; pointer-events: none; }
```
